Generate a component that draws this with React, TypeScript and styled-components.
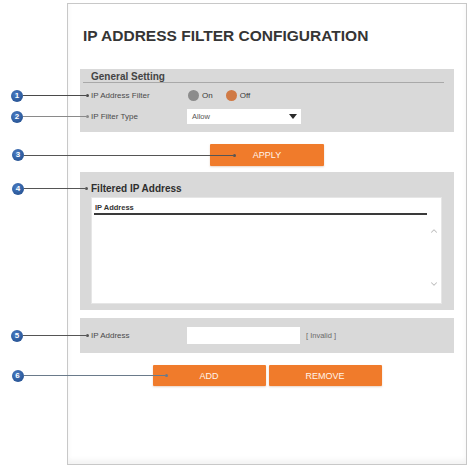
import styled, { createGlobalStyle } from 'styled-components'
import { ChevronUp, ChevronDown } from 'lucide-react'

const GlobalStyle = createGlobalStyle`
  body {
    margin: 0;
    background: #ffffff;
    font-family: 'Liberation Sans', Arial, sans-serif;
  }
`

const Page = styled.div`
  position: relative;
  width: 470px;
  height: 471px;
  box-sizing: border-box;
  padding: 3px 0 0 67px;
  overflow: hidden;
`

const Panel = styled.div`
  width: 400px;
  height: 462px;
  box-sizing: border-box;
  border: 1px solid #c8c8c8;
  box-shadow: inset 0 -4px 5px rgba(0, 0, 0, 0.05);
  padding: 22px 12px 0;
  display: flex;
  flex-direction: column;
`

const Title = styled.h1`
  margin: 0 0 0 3px;
  font-size: 15.5px;
  line-height: 20px;
  font-weight: bold;
  color: #353535;
`

const Section = styled.section<{ $gap: number }>`
  margin-top: ${(p) => p.$gap}px;
  background: #d9d9d9;
  display: flex;
  flex-direction: column;
`

const GroupHeading = styled.h2`
  margin: 2px 10px 0 3px;
  padding-left: 8px;
  font-size: 10px;
  line-height: 11px;
  font-weight: bold;
  color: #444;
  border-bottom: 1px solid #a9a9a9;
`

const ListHeading = styled.h2`
  position: relative;
  align-self: flex-start;
  margin: 10px 0 2px 11px;
  font-size: 10px;
  line-height: 13px;
  font-weight: bold;
  color: #2e2e2e;
`

const Rows = styled.div`
  display: flex;
  flex-direction: column;
  padding: 2px 0 5px;
`

const Row = styled.div<{ $pad?: number }>`
  display: grid;
  grid-template-columns: 96px auto;
  align-items: center;
  min-height: 21px;
  padding: ${(p) => p.$pad ?? 0}px 0 ${(p) => p.$pad ?? 0}px 11px;
`

const Label = styled.span`
  position: relative;
  justify-self: start;
  font-size: 8px;
  color: #4a4a4a;
`

const RadioGroup = styled.div`
  display: flex;
  align-items: center;
  padding-left: 1px;
`

const RadioDot = styled.span<{ $on: boolean }>`
  width: 11px;
  height: 11px;
  border-radius: 50%;
  background: ${(p) => (p.$on ? '#d07a45' : '#8c8c8c')};
  margin-right: 3px;
`

const RadioText = styled.span`
  font-size: 8px;
  color: #3a3a3a;
  margin-right: 13px;
`

const SelectBox = styled.div`
  display: flex;
  align-items: center;
  justify-content: space-between;
  width: 114px;
  height: 15px;
  box-sizing: border-box;
  padding: 0 4px 0 5px;
  background: #ffffff;
  font-size: 7.5px;
  color: #555;
`

const Caret = styled.span`
  width: 0;
  height: 0;
  border-left: 4px solid transparent;
  border-right: 4px solid transparent;
  border-top: 5px solid #2a2a2a;
`

const ButtonRow = styled.div<{ $gap: number }>`
  display: flex;
  justify-content: center;
  gap: 3px;
  margin-top: ${(p) => p.$gap}px;
`

const OrangeButton = styled.button<{ $w: number; $h: number }>`
  position: relative;
  width: ${(p) => p.$w}px;
  height: ${(p) => p.$h}px;
  border: none;
  border-radius: 1px;
  background: #f07b2b;
  color: #fff4ea;
  font-family: inherit;
  font-size: 9px;
  padding: 0;
  box-shadow: 0 1px 2px rgba(160, 80, 20, 0.25);
`

const ListBox = styled.div`
  display: flex;
  margin: 0 12px 6px 11px;
  height: 107px;
  background: #ffffff;
  border: 1px solid #e6e6e6;
  box-sizing: border-box;
`

const ListColumn = styled.div`
  flex: 1;
  padding-left: 2px;
`

const ListHeader = styled.div`
  padding: 5px 0 0 1px;
  font-size: 7.5px;
  line-height: 10px;
  font-weight: bold;
  color: #333;
  border-bottom: 2px solid #3a3a3a;
`

const ScrollColumn = styled.div`
  width: 14px;
  display: flex;
  flex-direction: column;
  align-items: center;
  justify-content: space-between;
  padding: 28px 0 14px;
  color: #bdbdbd;
`

const TextInput = styled.div`
  width: 113px;
  height: 17px;
  background: #ffffff;
`

const FieldLine = styled.div`
  display: flex;
  align-items: center;
  gap: 6px;
`

const Hint = styled.span`
  font-size: 7.5px;
  color: #6a6a6a;
`

// numbered marker with a leader line running into the part it labels
const CalloutWrap = styled.span<{ $from: number; $into: number }>`
  position: absolute;
  top: 50%;
  left: ${(p) => -p.$from}px;
  width: ${(p) => p.$from + p.$into}px;
  height: 12px;
  margin-top: -6px;
  display: flex;
  align-items: center;
  z-index: 2;
  pointer-events: none;
`

const Marker = styled.span`
  flex: none;
  width: 12px;
  height: 12px;
  border-radius: 50%;
  background: radial-gradient(circle at 40% 35%, #4a7cc4, #2a5798 70%);
  color: #ffffff;
  font-size: 8px;
  font-weight: bold;
  line-height: 12px;
  text-align: center;
`

const Leader = styled.span<{ $tone: string }>`
  flex: 1;
  height: 1px;
  background: ${(p) => p.$tone};
`

const LeaderEnd = styled.span<{ $tone: string }>`
  flex: none;
  width: 3px;
  height: 3px;
  border-radius: 50%;
  background: ${(p) => p.$tone};
`

function Callout({ n, from, into = -1, tone = '#555' }: { n: number; from: number; into?: number; tone?: string }) {
  return (
    <CalloutWrap $from={from} $into={into}>
      <Marker>{n}</Marker>
      <Leader $tone={tone} />
      <LeaderEnd $tone={tone} />
    </CalloutWrap>
  )
}

export default function App() {
  return (
    <>
      <GlobalStyle />
      <Page>
        <Panel>
          <Title>IP ADDRESS FILTER CONFIGURATION</Title>

          <Section $gap={23}>
            <GroupHeading>General Setting</GroupHeading>
            <Rows>
              <Row>
                <Label>
                  <Callout n={1} from={80} into={-2} tone="#4a4a4a" />
                  IP Address Filter
                </Label>
                <RadioGroup>
                  <RadioDot $on={false} />
                  <RadioText>On</RadioText>
                  <RadioDot $on={true} />
                  <RadioText>Off</RadioText>
                </RadioGroup>
              </Row>
              <Row>
                <Label>
                  <Callout n={2} from={80} into={-2} tone="#8a8a8a" />
                  IP Filter Type
                </Label>
                <SelectBox>
                  Allow
                  <Caret />
                </SelectBox>
              </Row>
            </Rows>
          </Section>

          <ButtonRow $gap={12}>
            <OrangeButton $w={114} $h={22}>
              <Callout n={3} from={198} into={26} tone="#555" />
              APPLY
            </OrangeButton>
          </ButtonRow>

          <Section $gap={6}>
            <ListHeading>
              <Callout n={4} from={79} into={-3} tone="#555" />
              Filtered IP Address
            </ListHeading>
            <ListBox>
              <ListColumn>
                <ListHeader>IP Address</ListHeader>
              </ListColumn>
              <ScrollColumn>
                <ChevronUp size={10} strokeWidth={2.5} />
                <ChevronDown size={10} strokeWidth={2.5} />
              </ScrollColumn>
            </ListBox>
          </Section>

          <Section $gap={8}>
            <Row $pad={7}>
              <Label>
                <Callout n={5} from={80} into={-2} tone="#555" />
                IP Address
              </Label>
              <FieldLine>
                <TextInput />
                <Hint>[ Invalid ]</Hint>
              </FieldLine>
            </Row>
          </Section>

          <ButtonRow $gap={12}>
            <OrangeButton $w={113} $h={21}>
              <Callout n={6} from={141} into={15} tone="#6a7a8a" />
              ADD
            </OrangeButton>
            <OrangeButton $w={113} $h={21}>
              REMOVE
            </OrangeButton>
          </ButtonRow>
        </Panel>
      </Page>
    </>
  )
}
